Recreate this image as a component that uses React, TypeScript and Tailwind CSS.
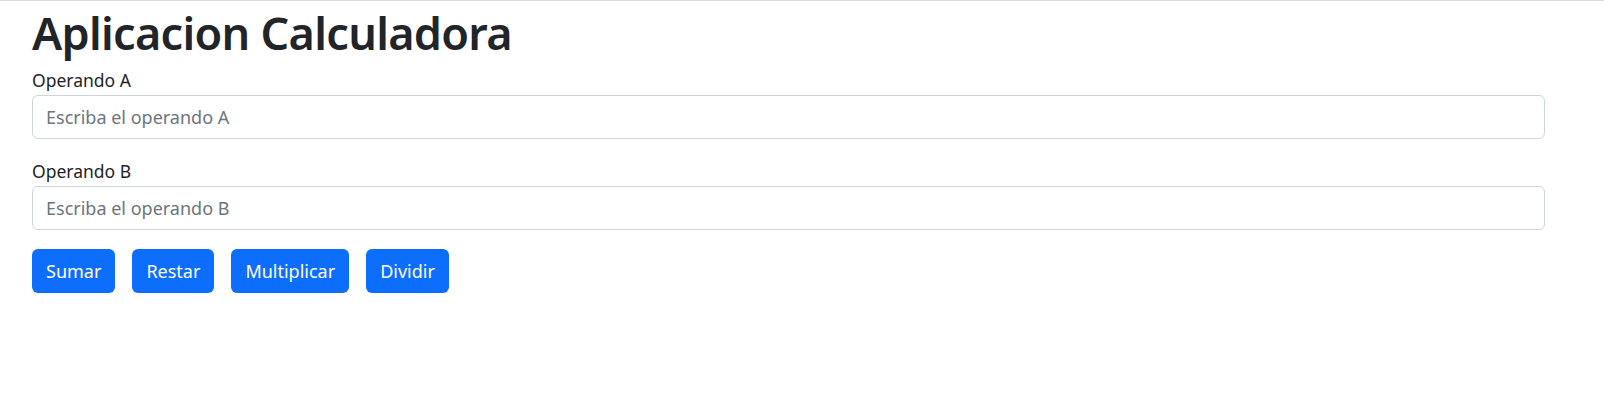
export default function App() {
  return (
    <div className="min-h-screen w-full bg-white border-t border-[#dadce0] font-['Noto_Sans',sans-serif] text-[#212529]">
      <div className="pl-[32px] pr-[59px] pt-[4px]">
        <h1 className="text-[45px] leading-[56px] font-semibold tracking-[-0.7px] mb-[5px]">
          Aplicacion Calculadora
        </h1>
        <div className="mb-[18px]">
          <label htmlFor="a" className="block text-[17.5px] leading-[28px] mb-[1px]">
            Operando A
          </label>
          <input
            id="a"
            type="text"
            placeholder="Escriba el operando A"
            className="block w-full h-[44px] px-[13px] rounded-[6px] border border-[#ced4da] text-[18px] placeholder:text-[#6c757d] outline-none"
          />
        </div>
        <div className="mb-[19px]">
          <label htmlFor="b" className="block text-[17.5px] leading-[28px] mb-[1px]">
            Operando B
          </label>
          <input
            id="b"
            type="text"
            placeholder="Escriba el operando B"
            className="block w-full h-[44px] px-[13px] rounded-[6px] border border-[#ced4da] text-[18px] placeholder:text-[#6c757d] outline-none"
          />
        </div>
        <div className="flex gap-[17px]">
          {["Sumar", "Restar", "Multiplicar", "Dividir"].map((t) => (
            <button
              key={t}
              className="h-[44px] px-[14px] rounded-[6px] bg-[#0d6efd] text-white text-[18px]"
            >
              {t}
            </button>
          ))}
        </div>
      </div>
    </div>
  );
}
